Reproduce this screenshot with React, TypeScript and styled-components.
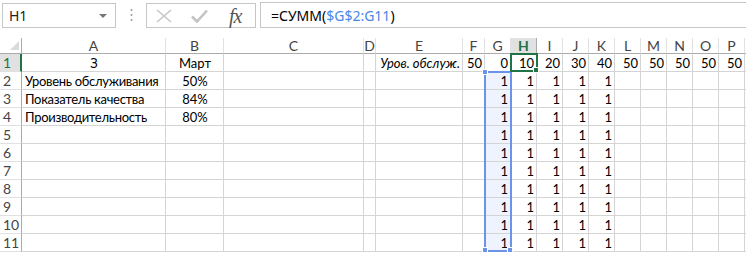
import { FC, Fragment } from "react";
import styled, { createGlobalStyle } from "styled-components";

const GlobalStyle = createGlobalStyle`
  html, body {
    margin: 0;
    padding: 0;
    background: #fff;
  }
  body {
    font-family: "Noto Sans", "Liberation Sans", sans-serif;
    overflow: hidden;
  }
`;

const COLS = ["A", "B", "C", "D", "E", "F", "G", "H", "I", "J", "K", "L", "M", "N", "O", "P", ""];
const WIDTHS = [22, 144, 58, 140, 12, 87, 22, 26, 26, 26, 26, 26, 26, 26, 26, 26, 26, 10];
const HEADER_H = 16;
const ROW_H = 18;

const GREEN = "#217346";
const BLUE = "#6b93ea";

type Align = "left" | "center" | "right";
interface CellData {
  v: string;
  align?: Align;
  italic?: boolean;
}

const row1: Record<string, CellData> = {
  A: { v: "З", align: "center" },
  B: { v: "Март", align: "center" },
  E: { v: "Уров. обслуж.", align: "right", italic: true },
  F: { v: "50" },
  G: { v: "0" },
  H: { v: "10" },
  I: { v: "20" },
  J: { v: "30" },
  K: { v: "40" },
  L: { v: "50" },
  M: { v: "50" },
  N: { v: "50" },
  O: { v: "50" },
  P: { v: "50" },
};

const labels = [
  ["Уровень обслуживания", "50%"],
  ["Показатель качества", "84%"],
  ["Производительность", "80%"],
];

const buildRows = () => {
  const rows: Record<string, CellData>[] = [row1];
  for (let r = 2; r <= 11; r++) {
    const row: Record<string, CellData> = {};
    const l = labels[r - 2];
    if (l) {
      row.A = { v: l[0], align: "left" };
      row.B = { v: l[1], align: "center" };
    }
    ["G", "H", "I", "J", "K"].forEach((c) => (row[c] = { v: "1" }));
    rows.push(row);
  }
  return rows;
};

const rows = buildRows();

/* ---------- formula bar ---------- */

const FormulaBar = styled.div`
  display: flex;
  align-items: center;
  height: 30px;
  padding: 0 0 0 2px;
`;

const NameBox = styled.div`
  box-sizing: border-box;
  width: 114px;
  height: 25px;
  margin-top: 1px;
  border: 1px solid #c6c6c6;
  display: flex;
  align-items: center;
  justify-content: space-between;
  padding: 0 6px 0 6px;
  font-size: 14px;
  color: #222;
`;

const Caret = styled.span`
  width: 0;
  height: 0;
  border-left: 4px solid transparent;
  border-right: 4px solid transparent;
  border-top: 4px solid #777;
  margin-right: 2px;
`;

const Grip = styled.div`
  width: 30px;
  display: flex;
  justify-content: center;
`;

const ButtonsBox = styled.div`
  box-sizing: border-box;
  width: 110px;
  height: 25px;
  margin-top: 1px;
  border: 1px solid #c6c6c6;
  display: flex;
  align-items: center;
  padding: 0 8px 0 9px;
  gap: 19px;
`;

const Fx = styled.span`
  font-family: "Liberation Serif", "DejaVu Serif", serif;
  font-style: italic;
  font-size: 20px;
  color: #555;
  margin-left: 2px;
  letter-spacing: -1px;
  line-height: 1;
`;

const FormulaInput = styled.div`
  box-sizing: border-box;
  flex: 1;
  height: 26px;
  margin-left: 4px;
  border: 1px solid #c6c6c6;
  border-right: none;
  display: flex;
  align-items: center;
  padding-left: 10px;
  font-size: 14px;
  color: #000;
`;

const RefText = styled.span`
  color: #4a86e8;
`;

/* ---------- sheet ---------- */

const SheetWrap = styled.div`
  position: relative;
  margin-top: 8px;
`;

const Sheet = styled.div`
  display: grid;
  grid-template-columns: ${WIDTHS.map((w) => `${w}px`).join(" ")};
  grid-template-rows: ${HEADER_H}px repeat(11, ${ROW_H}px);
  font-family: "Lato", "Noto Sans", sans-serif;
  font-size: 13px;
`;

const Corner = styled.div`
  box-sizing: border-box;
  border-right: 1px solid #ababab;
  border-bottom: 1px solid #ababab;
  position: relative;
  &::after {
    content: "";
    position: absolute;
    right: 2px;
    bottom: 3px;
    width: 0;
    height: 0;
    border-left: 9px solid transparent;
    border-bottom: 9px solid #dadada;
  }
`;

const ColHeader = styled.div<{ $active?: boolean }>`
  box-sizing: border-box;
  border-right: 1px solid ${({ $active }) => ($active ? "#ababab" : "#e1e1e1")};
  border-bottom: 1px solid ${({ $active }) => ($active ? GREEN : "#ababab")};
  background: ${({ $active }) => ($active ? "#e1e1e1" : "#fff")};
  color: ${({ $active }) => ($active ? GREEN : "#444")};
  font-weight: ${({ $active }) => ($active ? 700 : 400)};
  display: flex;
  align-items: center;
  justify-content: center;
  font-size: 14px;
  line-height: 14px;
`;

const RowHeader = styled.div<{ $active?: boolean }>`
  box-sizing: border-box;
  border-right: ${({ $active }) => ($active ? `2px solid ${GREEN}` : "1px solid #ababab")};
  border-bottom: 1px solid #e1e1e1;
  background: ${({ $active }) => ($active ? "#e1e1e1" : "#fff")};
  color: ${({ $active }) => ($active ? GREEN : "#444")};
  display: flex;
  align-items: center;
  padding: 1px 0 0 3px;
  font-size: 14px;
  line-height: 1;
`;

const Cell = styled.div<{ $align: Align; $italic?: boolean; $sel?: boolean }>`
  box-sizing: border-box;
  border-right: 1px solid #d4d4d4;
  border-bottom: 1px solid #d4d4d4;
  background: ${({ $sel }) => ($sel ? "#eef3fd" : "#fff")};
  display: flex;
  align-items: center;
  justify-content: ${({ $align }) =>
    $align === "left" ? "flex-start" : $align === "center" ? "center" : "flex-end"};
  padding: 2px 2px 0 3px;
  font-style: ${({ $italic }) => ($italic ? "italic" : "normal")};
  letter-spacing: ${({ $align }) => ($align === "left" ? "-0.3px" : "0")};
  color: #000;
  white-space: nowrap;
  line-height: 15px;
`;

const Overlay = styled.div`
  position: absolute;
  box-sizing: border-box;
  pointer-events: none;
`;

const RefBox = styled(Overlay)`
  border: 2px solid ${BLUE};
`;

const ActiveBox = styled(Overlay)`
  border: 2px solid ${GREEN};
`;

const Handle = styled(Overlay)<{ $color: string }>`
  width: 6px;
  height: 6px;
  background: ${({ $color }) => $color};
  border: 1px solid #fff;
`;

const colLeft = (idx: number) => WIDTHS.slice(0, idx).reduce((a, b) => a + b, 0);

const FormulaIcons: FC = () => (
  <ButtonsBox>
    <svg width="16" height="14" viewBox="0 0 16 14">
      <path d="M1 1 L15 13 M15 1 L1 13" stroke="#c3c3c3" strokeWidth="1.4" fill="none" />
    </svg>
    <svg width="17" height="14" viewBox="0 0 17 14">
      <path d="M1 7.5 L6 12.5 L16 1.5" stroke="#c3c3c3" strokeWidth="2.6" fill="none" />
    </svg>
    <Fx>fx</Fx>
  </ButtonsBox>
);

const App: FC = () => {
  const gIdx = COLS.indexOf("G") + 1;
  const hIdx = COLS.indexOf("H") + 1;
  const refLeft = colLeft(gIdx) - 1;
  const refTop = HEADER_H + ROW_H - 1;
  const refW = WIDTHS[gIdx] + 2;
  const refH = ROW_H * 10 + 1;
  const actLeft = colLeft(hIdx) - 1;
  const actTop = HEADER_H - 1;
  const actW = WIDTHS[hIdx] + 2;
  const actH = ROW_H + 1;

  return (
    <>
      <GlobalStyle />
      <FormulaBar>
        <NameBox>
          <span>H1</span>
          <Caret />
        </NameBox>
        <Grip>
          <svg width="3" height="14" viewBox="0 0 3 14">
            <circle cx="1.5" cy="2" r="1" fill="#9a9a9a" />
            <circle cx="1.5" cy="7" r="1" fill="#9a9a9a" />
            <circle cx="1.5" cy="12" r="1" fill="#9a9a9a" />
          </svg>
        </Grip>
        <FormulaIcons />
        <FormulaInput>
          =СУММ(<RefText>$G$2:G11</RefText>)
        </FormulaInput>
      </FormulaBar>
      <SheetWrap>
        <Sheet>
          <Corner />
          {COLS.map((c, i) => (
            <ColHeader key={`h${i}`} $active={c === "H"}>
              {c}
            </ColHeader>
          ))}
          {rows.map((row, r) => (
            <Fragment key={`r${r}`}>
              <RowHeader $active={r === 0}>{r + 1}</RowHeader>
              {COLS.map((c, i) => {
                const d = row[c];
                return (
                  <Cell
                    key={`c${r}-${i}`}
                    $align={d?.align ?? "right"}
                    $italic={d?.italic}
                    $sel={c === "G" && r > 0}
                  >
                    {d?.v}
                  </Cell>
                );
              })}
            </Fragment>
          ))}
        </Sheet>
        <RefBox style={{ left: refLeft, top: refTop, width: refW, height: refH }} />
        <Handle $color={BLUE} style={{ left: refLeft - 2, top: refTop - 2 }} />
        <Handle $color={BLUE} style={{ left: refLeft - 2, top: refTop + refH - 5 }} />
        <Handle $color={BLUE} style={{ left: refLeft + refW - 5, top: refTop + refH - 5 }} />
        <ActiveBox style={{ left: actLeft, top: actTop, width: actW, height: actH }} />
        <Handle $color={GREEN} style={{ left: actLeft + actW - 5, top: actTop + actH - 5 }} />
      </SheetWrap>
    </>
  );
};

export default App;
